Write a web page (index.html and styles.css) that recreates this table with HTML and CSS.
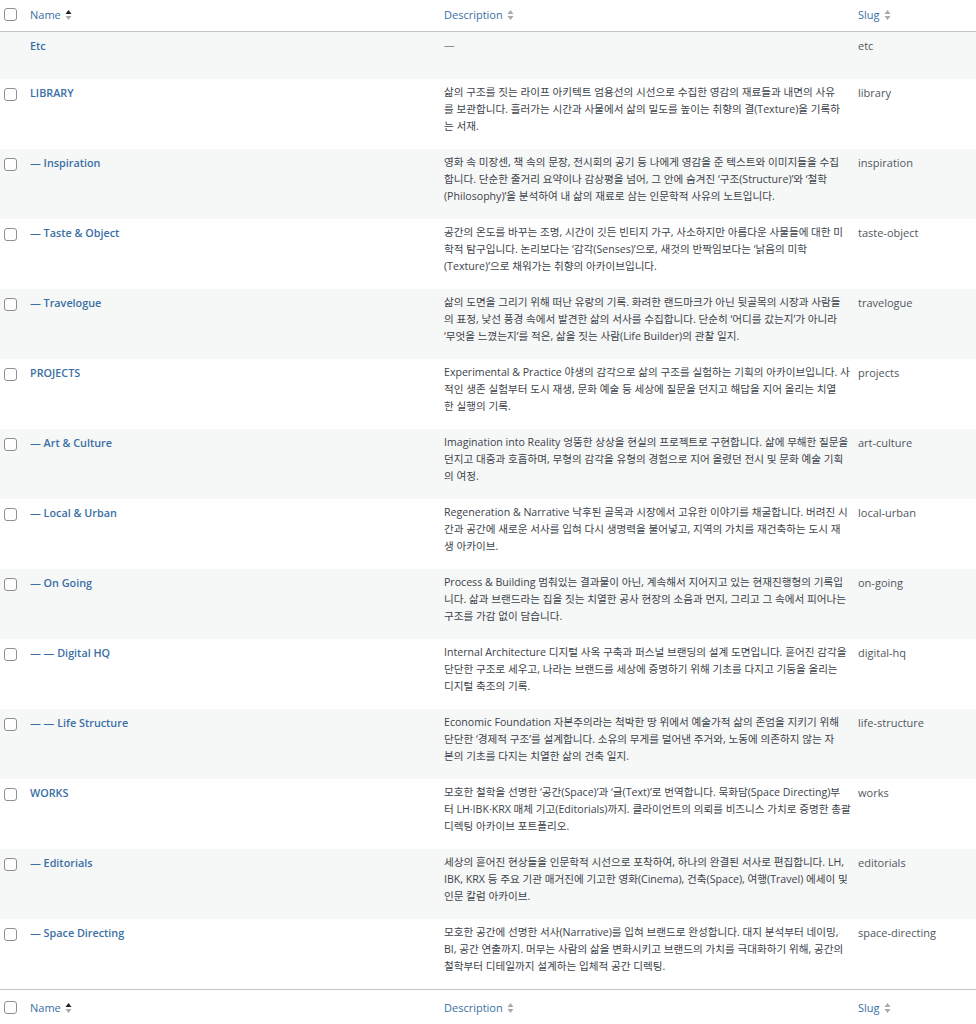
FILE: index.html
```html
<!DOCTYPE html>
<html lang="ko">
<head>
<meta charset="utf-8">
<title>Categories</title>
<link rel="stylesheet" href="styles.css">
</head>
<body>
<table class="list">
  <colgroup>
    <col class="c-check"><col class="c-name"><col class="c-desc"><col class="c-slug">
  </colgroup>
  <thead>
    <tr>
      <th class="check"><span class="cb"></span></th>
      <th class="name-h"><span class="sort-label">Name <svg class="sort" viewBox="0 0 7 12" width="7" height="12"><path class="up active" d="M0.5 5 L3.5 1 L6.5 5 Z"/><path class="down" d="M0.5 7 L3.5 11 L6.5 7 Z"/></svg></span></th>
      <th class="desc-h"><span class="sort-label">Description <svg class="sort" viewBox="0 0 7 12" width="7" height="12"><path class="up" d="M0.5 5 L3.5 1 L6.5 5 Z"/><path class="down" d="M0.5 7 L3.5 11 L6.5 7 Z"/></svg></span></th>
      <th class="slug-h"><span class="sort-label">Slug <svg class="sort" viewBox="0 0 7 12" width="7" height="12"><path class="up" d="M0.5 5 L3.5 1 L6.5 5 Z"/><path class="down" d="M0.5 7 L3.5 11 L6.5 7 Z"/></svg></span></th>
    </tr>
  </thead>
  <tbody>
    <tr class="alt">
      <td class="check"></td>
      <td class="name"><a>Etc</a><div class="actions"></div></td>
      <td class="desc dash">—</td>
      <td class="slug">etc</td>
    </tr>
    <tr>
      <td class="check"><span class="cb"></span></td>
      <td class="name"><a>LIBRARY</a><div class="actions"></div></td>
      <td class="desc">삶의 구조를 짓는 라이프 아키텍트 엄용선의 시선으로 수집한 영감의 재료들과 내면의 사유<br>를 보관합니다. 흘러가는 시간과 사물에서 삶의 밀도를 높이는 취향의 결(Texture)을 기록하<br>는 서재.</td>
      <td class="slug">library</td>
    </tr>
    <tr class="alt">
      <td class="check"><span class="cb"></span></td>
      <td class="name"><a>— Inspiration</a><div class="actions"></div></td>
      <td class="desc">영화 속 미장센, 책 속의 문장, 전시회의 공기 등 나에게 영감을 준 텍스트와 이미지들을 수집<br>합니다. 단순한 줄거리 요약이나 감상평을 넘어, 그 안에 숨겨진 ‘구조(Structure)’와 ‘철학<br>(Philosophy)’을 분석하여 내 삶의 재료로 삼는 인문학적 사유의 노트입니다.</td>
      <td class="slug">inspiration</td>
    </tr>
    <tr>
      <td class="check"><span class="cb"></span></td>
      <td class="name"><a>— Taste &amp; Object</a><div class="actions"></div></td>
      <td class="desc">공간의 온도를 바꾸는 조명, 시간이 깃든 빈티지 가구, 사소하지만 아름다운 사물들에 대한 미<br>학적 탐구입니다. 논리보다는 ‘감각(Senses)’으로, 새것의 반짝임보다는 ‘낡음의 미학<br>(Texture)’으로 채워가는 취향의 아카이브입니다.</td>
      <td class="slug">taste-object</td>
    </tr>
    <tr class="alt">
      <td class="check"><span class="cb"></span></td>
      <td class="name"><a>— Travelogue</a><div class="actions"></div></td>
      <td class="desc">삶의 도면을 그리기 위해 떠난 유랑의 기록. 화려한 랜드마크가 아닌 뒷골목의 시장과 사람들<br>의 표정, 낯선 풍경 속에서 발견한 삶의 서사를 수집합니다. 단순히 ‘어디를 갔는지’가 아니라<br>‘무엇을 느꼈는지’를 적은, 삶을 짓는 사람(Life Builder)의 관찰 일지.</td>
      <td class="slug">travelogue</td>
    </tr>
    <tr>
      <td class="check"><span class="cb"></span></td>
      <td class="name"><a>PROJECTS</a><div class="actions"></div></td>
      <td class="desc">Experimental &amp; Practice 야생의 감각으로 삶의 구조를 실험하는 기획의 아카이브입니다. 사<br>적인 생존 실험부터 도시 재생, 문화 예술 등 세상에 질문을 던지고 해답을 지어 올리는 치열<br>한 실행의 기록.</td>
      <td class="slug">projects</td>
    </tr>
    <tr class="alt">
      <td class="check"><span class="cb"></span></td>
      <td class="name"><a>— Art &amp; Culture</a><div class="actions"></div></td>
      <td class="desc">Imagination into Reality 엉뚱한 상상을 현실의 프로젝트로 구현합니다. 삶에 무해한 질문을<br>던지고 대중과 호흡하며, 무형의 감각을 유형의 경험으로 지어 올렸던 전시 및 문화 예술 기획<br>의 여정.</td>
      <td class="slug">art-culture</td>
    </tr>
    <tr>
      <td class="check"><span class="cb"></span></td>
      <td class="name"><a>— Local &amp; Urban</a><div class="actions"></div></td>
      <td class="desc">Regeneration &amp; Narrative 낙후된 골목과 시장에서 고유한 이야기를 채굴합니다. 버려진 시<br>간과 공간에 새로운 서사를 입혀 다시 생명력을 불어넣고, 지역의 가치를 재건축하는 도시 재<br>생 아카이브.</td>
      <td class="slug">local-urban</td>
    </tr>
    <tr class="alt">
      <td class="check"><span class="cb"></span></td>
      <td class="name"><a>— On Going</a><div class="actions"></div></td>
      <td class="desc">Process &amp; Building 멈춰있는 결과물이 아닌, 계속해서 지어지고 있는 현재진행형의 기록입<br>니다. 삶과 브랜드라는 집을 짓는 치열한 공사 현장의 소음과 먼지, 그리고 그 속에서 피어나는<br>구조를 가감 없이 담습니다.</td>
      <td class="slug">on-going</td>
    </tr>
    <tr>
      <td class="check"><span class="cb"></span></td>
      <td class="name"><a>— — Digital HQ</a><div class="actions"></div></td>
      <td class="desc">Internal Architecture 디지털 사옥 구축과 퍼스널 브랜딩의 설계 도면입니다. 흩어진 감각을<br>단단한 구조로 세우고, 나라는 브랜드를 세상에 증명하기 위해 기초를 다지고 기둥을 올리는<br>디지털 축조의 기록.</td>
      <td class="slug">digital-hq</td>
    </tr>
    <tr class="alt">
      <td class="check"><span class="cb"></span></td>
      <td class="name"><a>— — Life Structure</a><div class="actions"></div></td>
      <td class="desc">Economic Foundation 자본주의라는 척박한 땅 위에서 예술가적 삶의 존엄을 지키기 위해<br>단단한 ‘경제적 구조’를 설계합니다. 소유의 무게를 덜어낸 주거와, 노동에 의존하지 않는 자<br>본의 기초를 다지는 치열한 삶의 건축 일지.</td>
      <td class="slug">life-structure</td>
    </tr>
    <tr>
      <td class="check"><span class="cb"></span></td>
      <td class="name"><a>WORKS</a><div class="actions"></div></td>
      <td class="desc">모호한 철학을 선명한 ‘공간(Space)’과 ‘글(Text)’로 번역합니다. 묵화담(Space Directing)부<br>터 LH·IBK·KRX 매체 기고(Editorials)까지. 클라이언트의 의뢰를 비즈니스 가치로 증명한 총괄<br>디렉팅 아카이브 포트폴리오.</td>
      <td class="slug">works</td>
    </tr>
    <tr class="alt">
      <td class="check"><span class="cb"></span></td>
      <td class="name"><a>— Editorials</a><div class="actions"></div></td>
      <td class="desc">세상의 흩어진 현상들을 인문학적 시선으로 포착하여, 하나의 완결된 서사로 편집합니다. LH,<br>IBK, KRX 등 주요 기관 매거진에 기고한 영화(Cinema), 건축(Space), 여행(Travel) 에세이 및<br>인문 칼럼 아카이브.</td>
      <td class="slug">editorials</td>
    </tr>
    <tr>
      <td class="check"><span class="cb"></span></td>
      <td class="name"><a>— Space Directing</a><div class="actions"></div></td>
      <td class="desc">모호한 공간에 선명한 서사(Narrative)를 입혀 브랜드로 완성합니다. 대지 분석부터 네이밍,<br>BI, 공간 연출까지. 머무는 사람의 삶을 변화시키고 브랜드의 가치를 극대화하기 위해, 공간의<br>철학부터 디테일까지 설계하는 입체적 공간 디렉팅.</td>
      <td class="slug">space-directing</td>
    </tr>
  </tbody>
  <tfoot>
    <tr>
      <th class="check"><span class="cb"></span></th>
      <th class="name-h"><span class="sort-label">Name <svg class="sort" viewBox="0 0 7 12" width="7" height="12"><path class="up active" d="M0.5 5 L3.5 1 L6.5 5 Z"/><path class="down" d="M0.5 7 L3.5 11 L6.5 7 Z"/></svg></span></th>
      <th class="desc-h"><span class="sort-label">Description <svg class="sort" viewBox="0 0 7 12" width="7" height="12"><path class="up" d="M0.5 5 L3.5 1 L6.5 5 Z"/><path class="down" d="M0.5 7 L3.5 11 L6.5 7 Z"/></svg></span></th>
      <th class="slug-h"><span class="sort-label">Slug <svg class="sort" viewBox="0 0 7 12" width="7" height="12"><path class="up" d="M0.5 5 L3.5 1 L6.5 5 Z"/><path class="down" d="M0.5 7 L3.5 11 L6.5 7 Z"/></svg></span></th>
    </tr>
  </tfoot>
</table>
</body>
</html>
```

FILE: styles.css
```css
html, body {
  margin: 0;
  padding: 0;
  background: #ffffff;
}

body {
  font-family: "Open Sans", "Noto Sans CJK KR", sans-serif;
  font-size: 11px;
  color: #3c434a;
}

.list {
  width: 976px;
  border-collapse: collapse;
  table-layout: fixed;
}

.c-check { width: 26px; }
.c-name { width: 408px; }
.c-desc { width: 414px; }
.c-slug { width: 128px; }

th, td {
  text-align: left;
  vertical-align: top;
  font-weight: normal;
}

thead th, tfoot th {
  height: 29px;
  padding: 0 0 2px;
  vertical-align: middle;
  line-height: 16px;
}

tfoot th {
  padding: 3px 0 0;
}

thead tr {
  border-bottom: 1px solid #c3c4c7;
}

tfoot tr {
  border-top: 1px solid #c3c4c7;
}

thead th.check {
  padding: 0 0 2px 4px;
}

tfoot th.check {
  padding: 3px 0 0 4px;
}

thead .name-h, tfoot .name-h { padding-left: 4px; }
thead .desc-h, thead .slug-h,
tfoot .desc-h, tfoot .slug-h { padding-left: 10px; }

.sort-label {
  color: #3a6fa5;
  display: inline-flex;
  align-items: center;
  gap: 4px;
}

.sort path { fill: #a7aaad; }
.sort path.active { fill: #1d2327; }

.cb {
  display: block;
  width: 11px;
  height: 11px;
  border: 1px solid #8c8f94;
  border-radius: 3px;
  background: #fff;
}

tbody tr.alt { background: #f6f7f7; }

tbody td {
  padding: 5px 10px 14px;
  line-height: 17px;
}

tbody td.check { padding: 9px 0 0 4px; }

td.name {
  padding-left: 4px;
}

td.name a {
  color: #3a6fa5;
  font-weight: 600;
  text-decoration: none;
  font-size: 10.8px;
}

.actions {
  height: 11px;
}

td.desc {
  color: #3c434a;
  font-size: 10.6px;
  padding-right: 0;
  white-space: nowrap;
}

td.desc.dash {
  color: #8c8f94;
}

td.slug {
  color: #50575e;
}
```
